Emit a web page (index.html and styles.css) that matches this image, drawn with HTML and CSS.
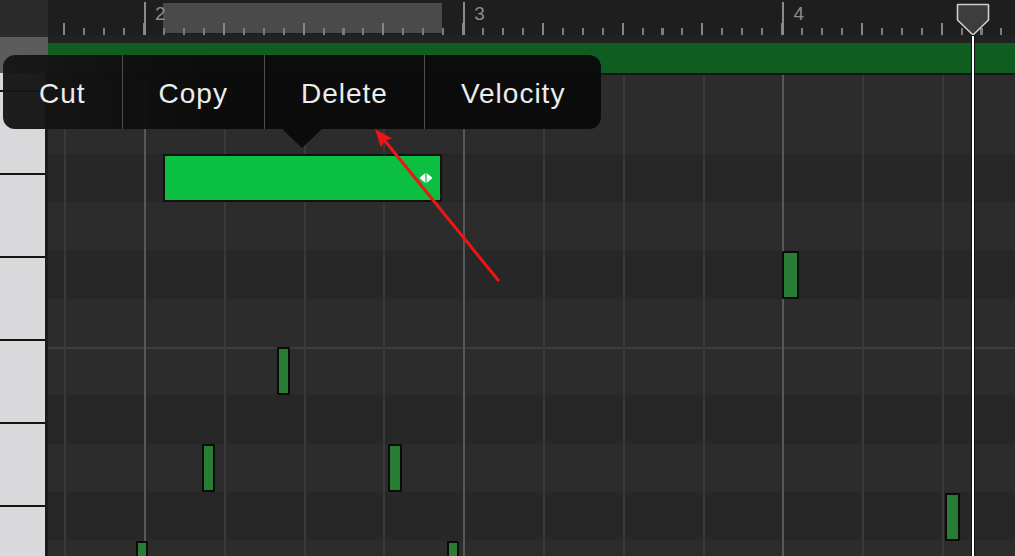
FILE: index.html
```html
<!DOCTYPE html>
<html lang="en">
<head>
    <meta charset="UTF-8">
    <title>Piano Roll</title>
    <link rel="stylesheet" href="styles.css">
</head>
<body>

    <div class="app">

        <!-- Keyboard column -->
        <div class="keys-col">
            <div class="corner"></div>
            <div class="track-head"></div>
            <div class="keys">
                <div class="key key-part"></div>
                <div class="key"></div>
                <div class="key"></div>
                <div class="key"></div>
                <div class="key"></div>
                <div class="key"></div>
                <div class="key"></div>
            </div>
        </div>

        <!-- Editor column -->
        <div class="roll">
            <div class="ruler">
                <div class="bar"></div>
                <div class="bar"><span>2</span></div>
                <div class="bar"><span>3</span></div>
                <div class="bar"><span>4</span></div>
            </div>

            <div class="lane">
                <div class="region"></div>
            </div>

            <div class="grid">
                <div class="note selected" style="left: 115px; top: 79px; width: 279px;">
                    <svg class="handle" width="14" height="10" viewBox="0 0 14 10">
                        <path d="M6.4 0 L6.4 10 L1.2 5.8 Q0.3 5 1.2 4.2 Z" fill="#fff"/>
                        <path d="M7.6 0 L12.8 4.2 Q13.7 5 12.8 5.8 L7.6 10 Z" fill="#fff"/>
                    </svg>
                </div>
                <div class="note" style="left: 734px; top: 176px; width: 17px;"></div>
                <div class="note" style="left: 897px; top: 418px; width: 15px;"></div>
                <div class="note" style="left: 229px; top: 272px; width: 13px;"></div>
                <div class="note" style="left: 154px; top: 369px; width: 13px;"></div>
                <div class="note" style="left: 340px; top: 369px; width: 14px;"></div>
                <div class="note" style="left: 88px; top: 466px; width: 12px;"></div>
                <div class="note" style="left: 399px; top: 466px; width: 12px;"></div>
            </div>

            <!-- Playhead -->
            <div class="playhead">
                <svg width="34" height="33" viewBox="0 0 34 33">
                    <path d="M2 1.5 H32 Q32.5 1.5 32.5 2 V17 L17 32 L1.5 17 V2 Q1.5 1.5 2 1.5 Z"
                          fill="#3d3d3f" stroke="#d0d0d0" stroke-width="1.6" stroke-linejoin="round"/>
                </svg>
                <div class="playhead-line"></div>
            </div>
        </div>

        <!-- Edit menu -->
        <div class="menu">
            <div class="menu-item">Cut</div>
            <div class="menu-item">Copy</div>
            <div class="menu-item">Delete</div>
            <div class="menu-item">Velocity</div>
        </div>

        <!-- Annotation arrow -->
        <svg class="arrow" width="1015" height="556" viewBox="0 0 1015 556">
            <line x1="498" y1="280" x2="385" y2="141" stroke="#f01515" stroke-width="3" stroke-linecap="round"/>
            <polygon points="375,129 392,138.5 384.5,140.6 381,147.5" fill="#f01515"/>
        </svg>
    </div>

</body>
</html>
```

FILE: styles.css
```css
/* === Global Styles === */
body {
    margin: 0;
    background: #1e1e1e;
    font-family: "Liberation Sans", Arial, sans-serif;
    overflow: hidden;
}

/* === Page frame === */
.app {
    position: relative;
    display: flex;
    width: 1015px;
    height: 556px;
    overflow: hidden;
}

/* === Keyboard column === */
.keys-col {
    width: 48px;
    flex: none;
    display: flex;
    flex-direction: column;
}

.corner {
    height: 37px;
    background: #2b2b2b;
}

.track-head {
    height: 36px;
    background: #5c5c5c;
}

.keys {
    flex: 1;
    display: flex;
    flex-direction: column;
    background: #1b1b1b;
    overflow: hidden;
}

.key {
    flex: none;
    height: 81px;
    margin-right: 3px;
    background: #d9d9db;
    border-bottom: 2px solid #141414;
}

.key-part { height: 17px; }

/* === Editor column === */
.roll {
    position: relative;
    flex: 1;
    display: flex;
    flex-direction: column;
    min-width: 0;
}

/* === Ruler with bar numbers and ticks === */
.ruler {
    height: 35px;
    flex: none;
    display: flex;
    overflow: hidden;
    background:
        linear-gradient(#4a4a4a, #4a4a4a) no-repeat 115px 3px / 279px 30px,
        #1e1e1e;
}

.bar {
    flex: none;
    width: 319.2px;
    background:
        linear-gradient(#8a8a8a, #8a8a8a) no-repeat 0 2px / 2px 33px,
        repeating-linear-gradient(90deg, #858585 0 1px, transparent 1px 78.8px, #858585 78.8px 79.8px) no-repeat 0 23px / 100% 12px,
        repeating-linear-gradient(90deg, #7c7c7c 0 1px, transparent 1px 18.95px, #7c7c7c 18.95px 19.95px) no-repeat 0 28px / 100% 7px;
}

.bar:first-child { margin-left: -223.2px; }

.bar span {
    display: block;
    padding: 4px 0 0 11px;
    font-size: 19px;
    line-height: 19px;
    color: #8c8c8c;
}

/* === Region lane === */
.lane {
    height: 40px;
    flex: none;
    box-sizing: border-box;
    padding-top: 8px;
    background: #222;
}

.region {
    height: 30px;
    background: #0f5d21;
    border-bottom: 2px solid #161616;
}

/* === Note grid === */
.grid {
    position: relative;
    flex: 1;
    background:
        repeating-linear-gradient(90deg, transparent 0 96px, #585858 96px 98px, transparent 98px 319.2px),
        repeating-linear-gradient(90deg, transparent 0 16.2px, #393939 16.2px 18.2px, transparent 18.2px 79.8px),
        linear-gradient(180deg,
            #2c2c2c 0 78.67px,
            #272727 78.67px 127px,
            #2c2c2c 127px 175.33px,
            #272727 175.33px 223.67px,
            #2c2c2c 223.67px 272px,
            #3e3e3e 272px 274px,
            #2c2c2c 274px 320.33px,
            #272727 320.33px 368.67px,
            #2c2c2c 368.67px 417px,
            #272727 417px 465.33px,
            #2c2c2c 465.33px 513.67px,
            #272727 513.67px 562px);
}

.note {
    position: absolute;
    box-sizing: border-box;
    height: 48px;
    background: #277d34;
    border: 2px solid #0b0b0b;
    border-radius: 1px;
}

.note.selected {
    display: flex;
    justify-content: flex-end;
    align-items: center;
    padding-right: 7px;
    background: #0abf41;
    border-color: #111;
}

.handle { display: block; }

/* === Playhead === */
.playhead {
    position: absolute;
    top: 3px;
    bottom: 0;
    left: 908px;
    width: 34px;
    display: flex;
    flex-direction: column;
    align-items: center;
}

.playhead svg {
    display: block;
    flex: none;
}

.playhead-line {
    flex: 1;
    width: 2px;
    background: #fff;
    box-shadow: 0 0 0 1px #111;
}

/* === Edit menu === */
.menu {
    position: absolute;
    left: 3px;
    top: 55px;
    height: 74px;
    display: flex;
    border-radius: 12px;
    background: linear-gradient(90deg, rgba(22, 22, 22, 0.96), rgba(10, 10, 10, 0.96) 35%);
}

.menu::after {
    content: "";
    position: absolute;
    left: 279px;
    top: 100%;
    border-left: 20px solid transparent;
    border-right: 20px solid transparent;
    border-top: 19px solid rgba(10, 10, 10, 0.96);
}

.menu-item {
    display: flex;
    align-items: center;
    padding: 4px 36px 0;
    font-size: 28px;
    letter-spacing: 1px;
    color: #ececec;
}

.menu-item + .menu-item { border-left: 1px solid #4e4e4e; }

/* === Annotation arrow === */
.arrow {
    position: absolute;
    left: 0;
    top: 0;
    pointer-events: none;
}
```
